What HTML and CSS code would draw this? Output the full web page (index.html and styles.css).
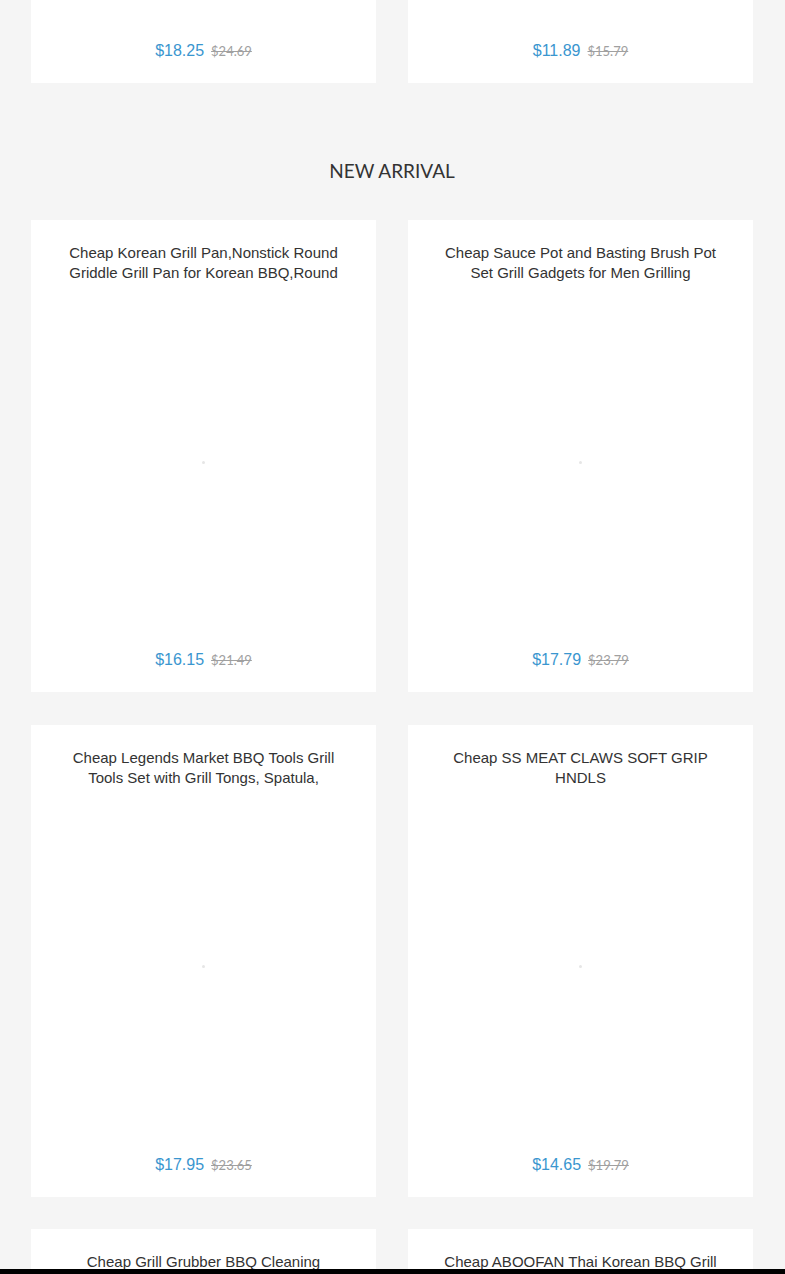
FILE: index.html
```html
<!DOCTYPE html>
<html lang="en">
<head>
<meta charset="utf-8">
<title>New Arrival</title>
<link rel="stylesheet" href="styles.css">
</head>
<body>
<div class="page">
  <div class="grid">
    <div class="card card-partial">
      <div class="price"><span class="now">$18.25</span><span class="was">$24.69</span></div>
    </div>
    <div class="card card-partial">
      <div class="price"><span class="now">$11.89</span><span class="was">$15.79</span></div>
    </div>
  </div>

  <h2 class="section-title">NEW ARRIVAL</h2>

  <div class="grid">
    <div class="card">
      <div class="title">Cheap Korean Grill Pan,Nonstick Round Griddle Grill Pan for Korean BBQ,Round Grill Plate</div>
      <div class="thumb"><span class="dot"></span></div>
      <div class="price"><span class="now">$16.15</span><span class="was">$21.49</span></div>
    </div>
    <div class="card">
      <div class="title">Cheap Sauce Pot and Basting Brush Pot Set Grill Gadgets for Men Grilling Accessories</div>
      <div class="thumb"><span class="dot"></span></div>
      <div class="price"><span class="now">$17.79</span><span class="was">$23.79</span></div>
    </div>
    <div class="card">
      <div class="title">Cheap Legends Market BBQ Tools Grill Tools Set with Grill Tongs, Spatula, Basting Brush</div>
      <div class="thumb"><span class="dot"></span></div>
      <div class="price"><span class="now">$17.95</span><span class="was">$23.65</span></div>
    </div>
    <div class="card">
      <div class="title">Cheap SS MEAT CLAWS SOFT GRIP HNDLS</div>
      <div class="thumb"><span class="dot"></span></div>
      <div class="price"><span class="now">$14.65</span><span class="was">$19.79</span></div>
    </div>
    <div class="card">
      <div class="title">Cheap Grill Grubber BBQ Cleaning Brush and Scraper</div>
      <div class="thumb"><span class="dot"></span></div>
      <div class="price"><span class="now">$12.35</span><span class="was">$16.49</span></div>
    </div>
    <div class="card">
      <div class="title">Cheap ABOOFAN Thai Korean BBQ Grill Pan Round Plate</div>
      <div class="thumb"><span class="dot"></span></div>
      <div class="price"><span class="now">$15.25</span><span class="was">$20.39</span></div>
    </div>
  </div>
</div>
<div class="bottom-bar"></div>
</body>
</html>
```

FILE: styles.css
```css
html, body {
  margin: 0;
  padding: 0;
  background: #f5f5f5;
}

.page {
  padding: 0 32px 0 31px;
}

.grid {
  display: grid;
  grid-template-columns: 1fr 1fr;
  column-gap: 32px;
  row-gap: 32.5px;
}

.card {
  background: #ffffff;
  padding: 23px 36px 22px;
  display: flex;
  flex-direction: column;
  align-items: stretch;
}

.card-partial {
  padding-top: 41px;
}

.title {
  font-family: "Liberation Sans", Arial, sans-serif;
  font-size: 15px;
  line-height: 20px;
  height: 40px;
  overflow: hidden;
  color: #333333;
  text-align: center;
}

.thumb {
  margin-top: 8px;
  height: 342px;
  display: flex;
  align-items: center;
  justify-content: center;
}

.dot {
  width: 3px;
  height: 3px;
  border-radius: 50%;
  background: #e6e6e6;
}

.price {
  margin-top: 17px;
  height: 20px;
  line-height: 20px;
  text-align: center;
  white-space: nowrap;
}

.card-partial .price {
  margin-top: 0;
}

.now {
  font-family: "Liberation Sans", Arial, sans-serif;
  font-size: 16px;
  color: #3a96cf;
}

.was {
  font-family: Lato, "Liberation Sans", sans-serif;
  font-size: 13px;
  color: #a0a0a0;
  text-decoration: line-through;
  margin-left: 7px;
}

.section-title {
  margin: 76px 0 37px;
  font-family: Lato, "Liberation Sans", sans-serif;
  font-weight: 400;
  font-size: 19px;
  line-height: 24px;
  color: #333333;
  text-align: center;
}

.bottom-bar {
  position: fixed;
  left: 0;
  right: 0;
  bottom: 0;
  height: 5px;
  background: #000000;
}
```
